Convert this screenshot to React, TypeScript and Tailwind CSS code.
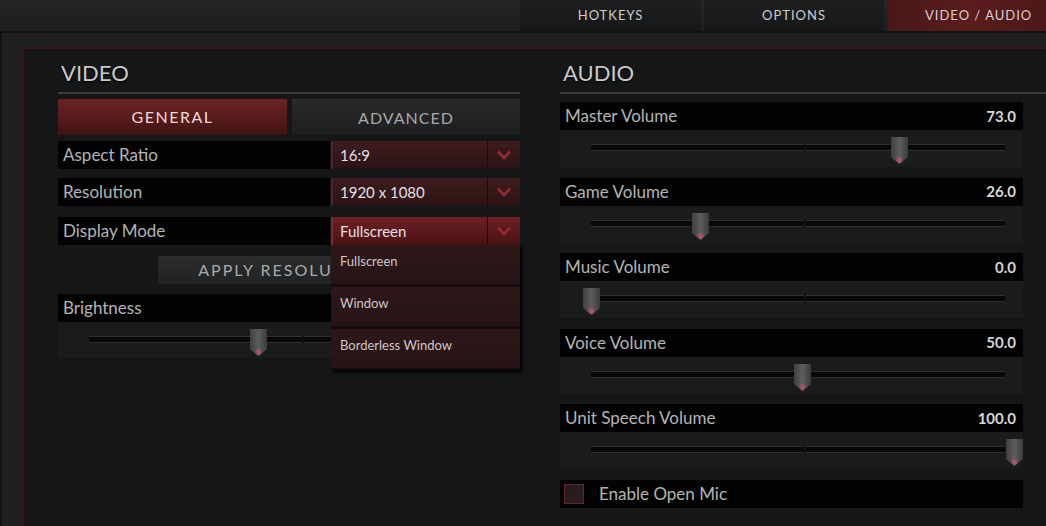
import React from 'react';

const labelCls =
  "h-[28px] bg-[#030303] flex items-center justify-between pl-[5px] pr-[7px] text-[17px] text-[#b4b4b4]";

function Thumb({ left }: { left: number }) {
  return (
    <svg
      className="absolute top-[7px]"
      style={{ left }}
      width="17"
      height="28"
      viewBox="0 0 17 28"
    >
      <defs>
        <linearGradient id="thumbFill" x1="0" y1="0" x2="1" y2="0">
          <stop offset="0" stopColor="#3e3f40" />
          <stop offset="0.5" stopColor="#5c5d5e" />
          <stop offset="1" stopColor="#3a3b3c" />
        </linearGradient>
        <radialGradient id="thumbGlow" cx="0.5" cy="0.5" r="0.5">
          <stop offset="0" stopColor="#e0506a" stopOpacity="0.9" />
          <stop offset="1" stopColor="#e0506a" stopOpacity="0" />
        </radialGradient>
      </defs>
      <path d="M0 0 H17 V20 L8.5 27 L0 20 Z" fill="url(#thumbFill)" />
      <ellipse cx="8.5" cy="23" rx="4" ry="4" fill="url(#thumbGlow)" />
    </svg>
  );
}

function SliderTrack({ value }: { value: number }) {
  const left = 31 + (value / 100) * 423 - 8.5;
  return (
    <div className="relative h-full">
      <div className="absolute left-[31px] right-[18px] top-[14px] h-[7px] bg-[#080808] border-t border-b border-[#2e2f30]" />
      <div className="absolute left-[244px] top-[13px] w-[2px] h-[9px] bg-[#111111]" />
      <Thumb left={left} />
    </div>
  );
}

function VolumeRow({ label, value }: { label: string; value: number }) {
  return (
    <div className="w-[463px]">
      <div className={labelCls}>
        <span>{label}</span>
        <span className="text-[15px] font-bold text-[#d6d6d6]">{value.toFixed(1)}</span>
      </div>
      <div className="h-[37px] bg-[#1a1b1c]">
        <SliderTrack value={value} />
      </div>
    </div>
  );
}

function Chevron() {
  return (
    <svg width="16" height="10" viewBox="0 0 16 10">
      <path d="M2 1.5 L8 8 L14 1.5" fill="none" stroke="#932a33" strokeWidth="2.6" />
    </svg>
  );
}

function Dropdown({ value, active }: { value: string; active?: boolean }) {
  return (
    <div
      className={
        active
          ? "w-[189px] h-[28px] flex bg-gradient-to-b from-[#6e2024] to-[#481315] border-l-2 border-[#7a2a2e]"
          : "w-[189px] h-[28px] flex bg-gradient-to-b from-[#3f1c1e] to-[#2a1315] border-l-2 border-[#4a2628]"
      }
    >
      <div className="flex-1 flex items-center pl-[7px] text-[15px] text-[#e6e0e0]">{value}</div>
      <div className="w-[33px] flex items-center justify-center border-l border-[#1c0c0d]">
        <Chevron />
      </div>
    </div>
  );
}

function Header({ title }: { title: string }) {
  return (
    <div>
      <div className="h-[43px] flex items-end pb-[8px] pl-[3px] text-[22px] leading-none text-[#c9c9c9] [text-shadow:0_1px_2px_#000]">
        {title}
      </div>
      <div className="h-[2px] bg-[#3a3c3d]" />
    </div>
  );
}

export default function App() {
  return (
    <div className="w-[1046px] h-[526px] overflow-hidden bg-[#1f2021] font-['Lato',sans-serif]">
      {/* top tabs */}
      <div className="h-[31px] flex justify-end bg-gradient-to-b from-[#252627] to-[#1c1d1e]">
        <div className="w-[181px] mr-[3px] flex items-center justify-center bg-gradient-to-b from-[#1e1f20] to-[#161718] text-[13px] tracking-[1px] text-[#cccccc]">
          HOTKEYS
        </div>
        <div className="w-[180px] mr-[4px] flex items-center justify-center bg-gradient-to-b from-[#1e1f20] to-[#161718] text-[13px] tracking-[1px] text-[#cccccc]">
          OPTIONS
        </div>
        <div className="w-[158px] flex items-center justify-start pl-[37px] bg-gradient-to-r from-[#4a1818] via-[#5a1c1c] to-[#4e1819] text-[13px] tracking-[1px] text-[#dccccc] whitespace-nowrap">
          VIDEO / AUDIO
        </div>
      </div>
      <div className="h-[2px] bg-[#111213]" />

      {/* frame */}
      <div className="pl-[20px] pt-[14px] border-l-2 border-[#161010]">
        <div className="h-[479px] border-l-2 border-t-2 border-[#3b1619] bg-[#151617] pl-[34px] flex gap-[40px]">
          {/* VIDEO */}
          <div className="w-[464px]">
            <Header title="VIDEO" />
            <div className="mt-[5px] flex gap-[5px]">
              <div className="w-[229px] h-[36px] flex items-center justify-center bg-gradient-to-b from-[#6a2222] via-[#5a1b1b] to-[#3e1314] text-[16px] tracking-[1.5px] text-[#eadcd6]">
                GENERAL
              </div>
              <div className="w-[228px] h-[36px] flex items-center justify-center bg-gradient-to-b from-[#262829] to-[#1c1e1f] border-t border-[#2f3332] text-[16px] tracking-[1px] text-[#a9a9a9]">
                ADVANCED
              </div>
            </div>

            <div className="mt-[6px] flex gap-[1px]">
              <div className={labelCls + " w-[272px]"}>Aspect Ratio</div>
              <Dropdown value="16:9" />
            </div>
            <div className="mt-[9px] flex gap-[1px]">
              <div className={labelCls + " w-[272px]"}>Resolution</div>
              <Dropdown value="1920 x 1080" />
            </div>
            <div className="relative mt-[11px] flex gap-[1px]">
              <div className={labelCls + " w-[272px]"}>Display Mode</div>
              <Dropdown value="Fullscreen" active />
              {/* open menu */}
              <div className="absolute left-[273px] top-[28px] w-[189px] z-10 bg-[#140c0d] flex flex-col gap-[3px] pb-[2px] shadow-[2px_2px_3px_#000]">
                {["Fullscreen", "Window", "Borderless Window"].map((item) => (
                  <div
                    key={item}
                    className="h-[39px] pl-[9px] pt-[8px] bg-gradient-to-b from-[#2e1719] to-[#261315] text-[13px] leading-[16px] text-[#cfc6c6]"
                  >
                    {item}
                  </div>
                ))}
              </div>
            </div>

            <div className="mt-[11px] flex justify-center">
              <div className="w-[262px] h-[28px] flex items-center justify-center bg-gradient-to-b from-[#2a2c2d] to-[#202223] text-[16px] tracking-[2px] text-[#aaaaaa] whitespace-nowrap">
                APPLY RESOLUTION
              </div>
            </div>

            <div className="mt-[10px] w-[462px]">
              <div className={labelCls}>Brightness</div>
              <div className="h-[36px] bg-[#1a1b1c]">
                <SliderTrack value={40} />
              </div>
            </div>
          </div>

          {/* AUDIO */}
          <div className="w-[490px]">
            <Header title="AUDIO" />
            <div className="mt-[8px] flex flex-col gap-[10.5px]">
              <VolumeRow label="Master Volume" value={73} />
              <VolumeRow label="Game Volume" value={26} />
              <VolumeRow label="Music Volume" value={0} />
              <VolumeRow label="Voice Volume" value={50} />
              <VolumeRow label="Unit Speech Volume" value={100} />
              <div className="w-[463px] h-[28px] bg-[#030303] flex items-center pl-[4px] gap-[15px] text-[17px] text-[#b4b4b4]">
                <div className="w-[20px] h-[20px] border border-[#5c2830] bg-[#2a1c1e]" />
                <span>Enable Open Mic</span>
              </div>
            </div>
          </div>
        </div>
      </div>
    </div>
  );
}
